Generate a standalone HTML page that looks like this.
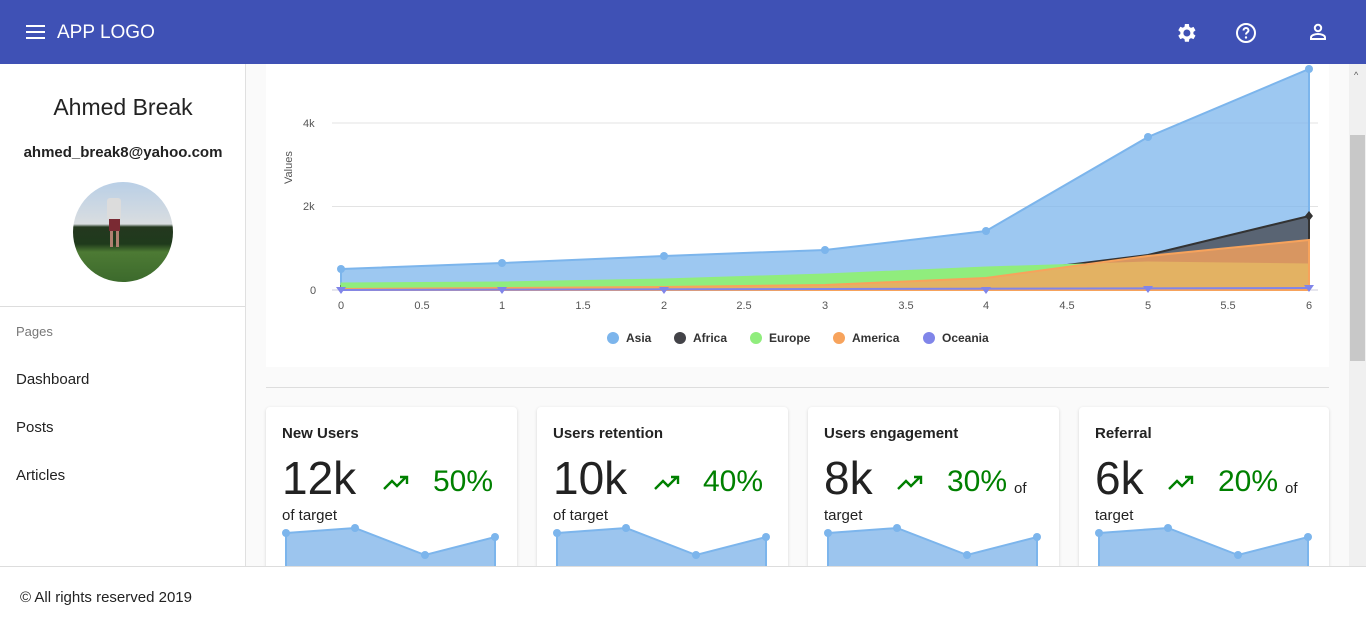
<!DOCTYPE html>
<html><head><style>
*{margin:0;padding:0;box-sizing:border-box}
body{width:1366px;height:626px;overflow:hidden;font-family:"Liberation Sans",sans-serif;background:#fafafa;position:relative;color:#222}
.top{position:absolute;left:0;top:0;width:1366px;height:64px;background:#3f51b5;color:#fff}
.side{position:absolute;left:0;top:64px;width:246px;height:502px;background:#fff;border-right:1px solid #e0e0e0}
.card{position:absolute;background:#fff;border-radius:4px;box-shadow:0 1px 3px rgba(0,0,0,.15);overflow:hidden}
.foot{position:absolute;left:0;top:566px;width:1366px;height:60px;background:#fff;border-top:1px solid #ddd;font-size:15px;padding:22px 20px}
.st{position:absolute;top:407px;width:251px;height:170px}
.st h4{position:absolute;left:16px;top:18px;font-size:15px;font-weight:bold;color:#222}
.st .big{position:absolute;left:16px;top:44px;font-size:46px;color:#222}
.st .pct{position:absolute;font-size:30px;color:#008000;top:58px}
.st .of{position:absolute;font-size:15px;color:#222}
</style></head><body>
<div class="top">
<svg style="position:absolute;left:26px;top:25px" width="20" height="15"><rect y="0" width="19" height="2" fill="#fff"/><rect y="6" width="19" height="2" fill="#fff"/><rect y="12" width="19" height="2" fill="#fff"/></svg>
<div style="position:absolute;left:57px;top:22px;font-size:19px">APP LOGO</div>
<svg style="position:absolute;left:1174px;top:21px" width="24" height="24" viewBox="0 0 24 24"><path fill="#fff" d="M19.4 13a7.5 7.5 0 000-2l2.1-1.6-2-3.5-2.5 1a7 7 0 00-1.7-1L14.9 3h-4l-.4 2.7a7 7 0 00-1.7 1l-2.5-1-2 3.5L6.4 11a7.5 7.5 0 000 2l-2.1 1.6 2 3.5 2.5-1c.5.4 1.1.7 1.7 1l.4 2.7h4l.4-2.7c.6-.3 1.2-.6 1.7-1l2.5 1 2-3.5zM12.9 15.5a3.5 3.5 0 110-7 3.5 3.5 0 010 7z"/></svg>
<svg style="position:absolute;left:1234px;top:21px" width="24" height="24" viewBox="0 0 24 24"><circle cx="12" cy="12" r="9" fill="none" stroke="#fff" stroke-width="2"/><path d="M9.5 9.5a2.5 2.5 0 015 0c0 1.8-2.5 1.8-2.5 4" fill="none" stroke="#fff" stroke-width="2"/><circle cx="12" cy="16.5" r="1.2" fill="#fff"/></svg>
<svg style="position:absolute;left:1306px;top:20px" width="24" height="24" viewBox="0 0 24 24"><circle cx="12" cy="8" r="3.2" fill="none" stroke="#fff" stroke-width="2"/><path d="M5 19v-1.5c0-2.5 4.5-3.5 7-3.5s7 1 7 3.5V19z" fill="none" stroke="#fff" stroke-width="2"/></svg>
</div>
<div class="side">
<div style="position:absolute;left:0;width:246px;top:30px;text-align:center;font-size:23px;color:#222">Ahmed Break</div>
<div style="position:absolute;left:0;width:246px;top:80px;text-align:center;font-size:15px;font-weight:bold;color:#222">ahmed_break8@yahoo.com</div>
<div style="position:absolute;left:73px;top:118px;width:100px;height:100px;border-radius:50%;overflow:hidden;background:linear-gradient(#b9cfe6 0%,#d9dde0 42%,#24381f 45%,#1f3a1c 62%,#4d7a34 70%,#3c6a2c 100%)">
<div style="position:absolute;left:34px;top:16px;width:14px;height:22px;background:#dcdcdc;border-radius:3px"></div>
<div style="position:absolute;left:36px;top:37px;width:11px;height:12px;background:#7a2a33"></div>
<div style="position:absolute;left:37px;top:49px;width:3px;height:16px;background:#b08070"></div><div style="position:absolute;left:43px;top:49px;width:3px;height:16px;background:#b08070"></div>
</div>
<div style="position:absolute;left:0;top:242px;width:245px;border-top:1px solid #ddd"></div>
<div style="position:absolute;left:16px;top:260px;font-size:13px;color:#777">Pages</div>
<div style="position:absolute;left:16px;top:307px;font-size:15px">Dashboard</div>
<div style="position:absolute;left:16px;top:355px;font-size:15px">Posts</div>
<div style="position:absolute;left:16px;top:403px;font-size:15px">Articles</div>
</div>
<div style="position:absolute;left:1349px;top:64px;width:17px;height:502px;background:#f0f0f0"><div style="position:absolute;left:1px;top:71px;width:15px;height:226px;background:#c8c8c8"></div><div style="position:absolute;left:5px;top:6px;font-size:9px;color:#555">^</div></div>
<div style="position:absolute;left:266px;top:64px;width:1063px;height:303px;background:#fff"></div>
<svg style="position:absolute;left:0;top:0" width="1366" height="400" font-family="Liberation Sans" font-size="11" fill="#555">
<line x1="332" y1="123" x2="1318" y2="123" stroke="#e3e3e3"/><line x1="332" y1="206.5" x2="1318" y2="206.5" stroke="#e3e3e3"/><line x1="332" y1="290" x2="1318" y2="290" stroke="#ccd"/>
<text x="303" y="127">4k</text><text x="303" y="210">2k</text><text x="310" y="294">0</text>
<text transform="translate(292,184) rotate(-90)">Values</text>
<g text-anchor="middle"><text x="341" y="309">0</text><text x="422" y="309">0.5</text><text x="502" y="309">1</text><text x="583" y="309">1.5</text><text x="664" y="309">2</text><text x="744" y="309">2.5</text><text x="825" y="309">3</text><text x="906" y="309">3.5</text><text x="986" y="309">4</text><text x="1067" y="309">4.5</text><text x="1148" y="309">5</text><text x="1228" y="309">5.5</text><text x="1309" y="309">6</text></g>
<path d="M341,269 L502,263 L664,256 L825,250 L986,231 L1148,137 L1309,69 L1309,290 L341,290Z" fill="#7cb5ec" fill-opacity=".75" stroke="#7cb5ec" stroke-width="2"/>
<path d="M341,286 L502,286 L664,285 L825,283 L986,275 L1148,255 L1309,216 L1309,290 L341,290Z" fill="#434348" fill-opacity=".75" stroke="#333" stroke-width="2"/>
<path d="M341,283 L502,282 L664,279 L825,274 L986,267 L1148,262 L1309,264 L1309,290 L341,290Z" fill="#90ed7d" stroke="#90ed7d"/>
<path d="M341,289 L502,288 L664,287 L825,285 L986,278 L1148,256 L1309,240 L1309,290 L341,290Z" fill="#f7a35c" fill-opacity=".8" stroke="#f7a35c" stroke-width="2"/>
<path d="M341,290 L1309,288" stroke="#8085e9" stroke-width="2"/>
<g fill="#7cb5ec"><circle cx="341" cy="269" r="4"/><circle cx="502" cy="263" r="4"/><circle cx="664" cy="256" r="4"/><circle cx="825" cy="250" r="4"/><circle cx="986" cy="231" r="4"/><circle cx="1148" cy="137" r="4"/><circle cx="1309" cy="69" r="4"/></g>
<path d="M1309,211 l4,5 -4,5 -4,-5z" fill="#333"/>
<g fill="#8085e9"><path d="M336,287h10l-5,7z"/><path d="M497,287h10l-5,7z"/><path d="M659,287h10l-5,7z"/><path d="M981,287h10l-5,7z"/><path d="M1143,286h10l-5,7z"/><path d="M1304,285h10l-5,7z"/></g>
<g font-weight="bold" font-size="12" fill="#333">
<circle cx="613" cy="338" r="6" fill="#7cb5ec"/><text x="626" y="342">Asia</text>
<circle cx="680" cy="338" r="6" fill="#434348"/><text x="693" y="342">Africa</text>
<circle cx="756" cy="338" r="6" fill="#90ed7d"/><text x="769" y="342">Europe</text>
<circle cx="839" cy="338" r="6" fill="#f7a35c"/><text x="852" y="342">America</text>
<circle cx="929" cy="338" r="6" fill="#8085e9"/><text x="942" y="342">Oceania</text></g>
<line x1="266" y1="387.5" x2="1329" y2="387.5" stroke="#ddd"/>
</svg>

<div class="card st" style="left:266px"><h4>New Users</h4><div class="big">12k</div><svg style="position:absolute;left:116px;top:66px" width="30" height="20"><path d="M2,16 l8,-8 5,5 9,-9 M18,4h7v7" fill="none" stroke="#008000" stroke-width="2.4"/></svg><div class="pct" style="left:167px">50%</div><div class="of" style="left:16px;top:100px">of target</div>
<svg style="position:absolute;left:0;top:0" width="251" height="170"><path d="M20,126 L89,121 L159,148 L229,130 L229,170 L20,170Z" fill="#9cc5ee" stroke="#7cb5ec" stroke-width="2"/><g fill="#7cb5ec"><circle cx="20" cy="126" r="4"/><circle cx="89" cy="121" r="4"/><circle cx="159" cy="148" r="4"/><circle cx="229" cy="130" r="4"/></g></svg></div>
<div class="card st" style="left:537px"><h4>Users retention</h4><div class="big">10k</div><svg style="position:absolute;left:116px;top:66px" width="30" height="20"><path d="M2,16 l8,-8 5,5 9,-9 M18,4h7v7" fill="none" stroke="#008000" stroke-width="2.4"/></svg><div class="pct" style="left:166px">40%</div><div class="of" style="left:16px;top:100px">of target</div>
<svg style="position:absolute;left:0;top:0" width="251" height="170"><path d="M20,126 L89,121 L159,148 L229,130 L229,170 L20,170Z" fill="#9cc5ee" stroke="#7cb5ec" stroke-width="2"/><g fill="#7cb5ec"><circle cx="20" cy="126" r="4"/><circle cx="89" cy="121" r="4"/><circle cx="159" cy="148" r="4"/><circle cx="229" cy="130" r="4"/></g></svg></div>
<div class="card st" style="left:808px"><h4>Users engagement</h4><div class="big">8k</div><svg style="position:absolute;left:88px;top:66px" width="30" height="20"><path d="M2,16 l8,-8 5,5 9,-9 M18,4h7v7" fill="none" stroke="#008000" stroke-width="2.4"/></svg><div class="pct" style="left:139px">30%</div><div class="of" style="left:206px;top:73px">of</div><div class="of" style="left:16px;top:100px">target</div>
<svg style="position:absolute;left:0;top:0" width="251" height="170"><path d="M20,126 L89,121 L159,148 L229,130 L229,170 L20,170Z" fill="#9cc5ee" stroke="#7cb5ec" stroke-width="2"/><g fill="#7cb5ec"><circle cx="20" cy="126" r="4"/><circle cx="89" cy="121" r="4"/><circle cx="159" cy="148" r="4"/><circle cx="229" cy="130" r="4"/></g></svg></div>
<div class="card st" style="left:1079px;width:250px"><h4>Referral</h4><div class="big">6k</div><svg style="position:absolute;left:88px;top:66px" width="30" height="20"><path d="M2,16 l8,-8 5,5 9,-9 M18,4h7v7" fill="none" stroke="#008000" stroke-width="2.4"/></svg><div class="pct" style="left:139px">20%</div><div class="of" style="left:206px;top:73px">of</div><div class="of" style="left:16px;top:100px">target</div>
<svg style="position:absolute;left:0;top:0" width="251" height="170"><path d="M20,126 L89,121 L159,148 L229,130 L229,170 L20,170Z" fill="#9cc5ee" stroke="#7cb5ec" stroke-width="2"/><g fill="#7cb5ec"><circle cx="20" cy="126" r="4"/><circle cx="89" cy="121" r="4"/><circle cx="159" cy="148" r="4"/><circle cx="229" cy="130" r="4"/></g></svg></div>
<div class="foot">© All rights reserved 2019</div>
</body></html>
